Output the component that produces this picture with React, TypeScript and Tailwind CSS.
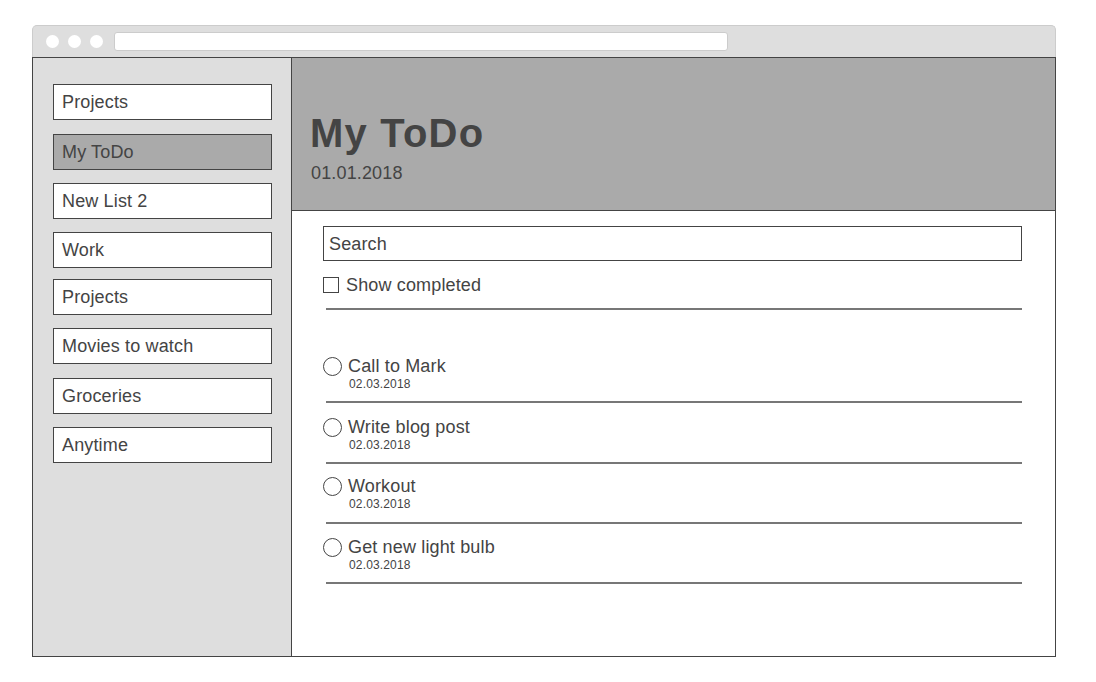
import React from "react";

const lists = [
  { name: "Projects", mt: "mt-0", active: false },
  { name: "My ToDo", mt: "mt-[14px]", active: true },
  { name: "New List 2", mt: "mt-[13px]", active: false },
  { name: "Work", mt: "mt-[13px]", active: false },
  { name: "Projects", mt: "mt-[11px]", active: false },
  { name: "Movies to watch", mt: "mt-[13px]", active: false },
  { name: "Groceries", mt: "mt-[14px]", active: false },
  { name: "Anytime", mt: "mt-[13px]", active: false },
];

const todos = [
  { title: "Call to Mark", date: "02.03.2018", pad: "pt-[47px] pb-[11px]" },
  { title: "Write blog post", date: "02.03.2018", pad: "pt-[15px] pb-[11px]" },
  { title: "Workout", date: "02.03.2018", pad: "pt-[13px] pb-[12px]" },
  { title: "Get new light bulb", date: "02.03.2018", pad: "pt-[14px] pb-[11px]" },
];

function Circle() {
  return (
    <svg width="19" height="19" viewBox="0 0 19 19" className="shrink-0">
      <circle cx="9.5" cy="9.5" r="9" fill="white" stroke="#444" strokeWidth="1" />
    </svg>
  );
}

export default function App() {
  return (
    <div className="min-h-screen bg-white pt-[25px] pl-[32px] [font-family:'Liberation_Sans',Arial,sans-serif] tracking-[0.15px] text-[#444]">
      <div className="w-[1024px]">
        {/* Browser chrome */}
        <div className="h-[32px] bg-[#dedede] border border-b-0 border-[#cccccc] rounded-t-[5px] flex items-center pl-[13px]">
          <div className="flex gap-[9px]">
            <span className="w-[13px] h-[13px] rounded-full bg-white" />
            <span className="w-[13px] h-[13px] rounded-full bg-white" />
            <span className="w-[13px] h-[13px] rounded-full bg-white" />
          </div>
          <div className="ml-[11px] w-[614px] h-[19px] bg-white border border-[#cccccc] rounded-[3px]" />
        </div>

        {/* Window content */}
        <div className="h-[600px] border border-[#444] flex">
          {/* Sidebar */}
          <aside className="w-[259px] shrink-0 bg-[#dedede] border-r border-[#444] pt-[26px] pl-[20px] flex flex-col">
            {lists.map((l, i) => (
              <div
                key={i}
                className={`${l.mt} w-[219px] h-[36px] border border-[#444] flex items-center pl-[8px] text-[18px] leading-none ${
                  l.active ? "bg-[#aaaaaa]" : "bg-white"
                }`}
              >
                {l.name}
              </div>
            ))}
          </aside>

          {/* Main */}
          <main className="flex-1 flex flex-col">
            <header className="h-[153px] shrink-0 bg-[#aaaaaa] border-b border-[#444] pt-[55px] pl-[18px]">
              <h1 className="text-[40px] leading-none font-bold tracking-[1.2px] text-[#444]">My ToDo</h1>
              <div className="mt-[11px] text-[18px] leading-none pl-[1px]">01.01.2018</div>
            </header>

            <section className="pt-[15px] pl-[31px]">
              <div className="w-[699px] h-[35px] border border-[#444] flex items-center pl-[5px] text-[18px] leading-none">
                Search
              </div>

              <label className="mt-[15px] flex items-center gap-[7px] text-[18px] leading-none">
                <span className="w-[16px] h-[16px] border border-[#444] bg-white" />
                Show completed
              </label>

              <div className="mt-[14px] ml-[3px] w-[696px] h-[2px] bg-[#777]" />

              {todos.map((t, i) => (
                <div key={i}>
                  <div className={`${t.pad} flex items-start gap-[6px]`}>
                    <Circle />
                    <div className="flex flex-col">
                      <div className="text-[18px] leading-none">{t.title}</div>
                      <div className="mt-[3px] pl-[1px] text-[12px] leading-none">{t.date}</div>
                    </div>
                  </div>
                  <div className="ml-[3px] w-[696px] h-[2px] bg-[#777]" />
                </div>
              ))}
            </section>
          </main>
        </div>
      </div>
    </div>
  );
}
